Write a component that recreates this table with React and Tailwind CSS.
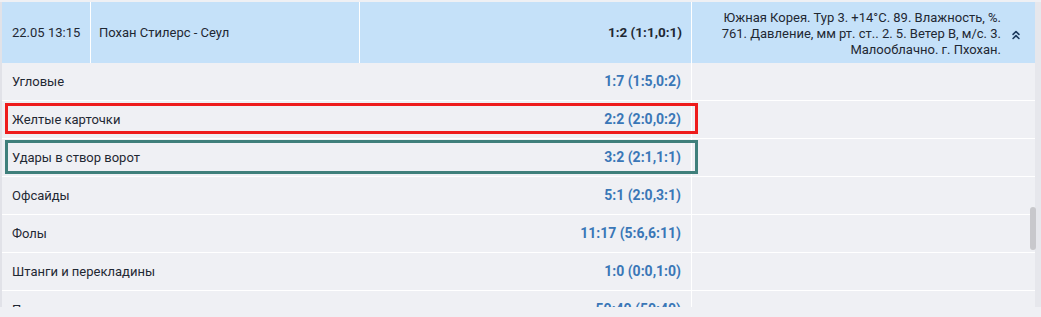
import React from "react";
import { ChevronsUp } from "lucide-react";

const rows = [
  { label: "Угловые", score: "1:7 (1:5,0:2)" },
  { label: "Желтые карточки", score: "2:2 (2:0,0:2)", mark: "red" },
  { label: "Удары в створ ворот", score: "3:2 (2:1,1:1)", mark: "teal" },
  { label: "Офсайды", score: "5:1 (2:0,3:1)" },
  { label: "Фолы", score: "11:17 (5:6,6:11)" },
  { label: "Штанги и перекладины", score: "1:0 (0:0,1:0)" },
  { label: "Передачи", score: "50:40 (50:40)" },
];

function StatRow({ row }) {
  return (
    <div className="relative flex h-[38px] shrink-0 border-b border-white">
      <div className="flex w-[690px] items-center justify-between border-r border-white pl-[10px] pr-[10px]">
        <span className="text-[#1f2833]">{row.label}</span>
        <span className="text-[14px] font-bold text-[#3a77b7]">{row.score}</span>
      </div>
      <div className="flex-1" />

      {/* annotation frames */}
      {row.mark === "red" && (
        <div className="pointer-events-none absolute left-[3px] top-[2px] h-[31px] w-[693px] border-[3px] border-[#ee1c1c]" />
      )}
      {row.mark === "teal" && (
        <div className="pointer-events-none absolute left-[3px] top-[1px] h-[34px] w-[693px] border-[3px] border-[#3f7f7b]" />
      )}
    </div>
  );
}

export default function App() {
  return (
    <div
      className="h-[317px] w-[1041px] overflow-hidden bg-[#eff0f4] pt-[2px] text-[13px]"
      style={{ fontFamily: "Roboto, 'Liberation Sans', sans-serif" }}
    >
      <div className="relative flex h-[305px]">
        <div className="w-[2px] bg-[#e1e2e8]" />

        <div className="flex flex-1 flex-col overflow-hidden">
          {/* match header */}
          <div className="flex h-[61px] shrink-0 bg-[#c5e1f9] text-[#1f2833]">
            <div className="flex w-[89px] items-center border-r border-white pl-[10px]">22.05 13:15</div>
            <div className="flex w-[269px] items-center border-r border-white pl-[8px]">Похан Стилерс - Сеул</div>
            <div className="flex w-[332px] items-center justify-end border-r border-white pr-[9px] text-[13.5px] font-bold">
              1:2 (1:1,0:1)
            </div>
            <div className="flex flex-1 items-center justify-end gap-[8px] pr-[12px]">
              <div className="pt-[2px] text-right leading-[16px]">
                Южная Корея. Тур 3. +14°C. 89. Влажность, %.
                <br />
                761. Давление, мм рт. ст.. 2. 5. Ветер В, м/с. 3.
                <br />
                Малооблачно. г. Пхохан.
              </div>
              <ChevronsUp size={14} strokeWidth={2.75} className="mt-[4px] text-[#1d3a5e]" />
            </div>
          </div>

          {rows.map((row) => (
            <StatRow key={row.label} row={row} />
          ))}
        </div>

        {/* scrollbar */}
        <div className="w-[6px] bg-[#e6e7ec]" />
        <div className="absolute right-[5px] top-[205px] h-[43px] w-[6px] rounded-full bg-[#c8c8cc]" />
      </div>
    </div>
  );
}
